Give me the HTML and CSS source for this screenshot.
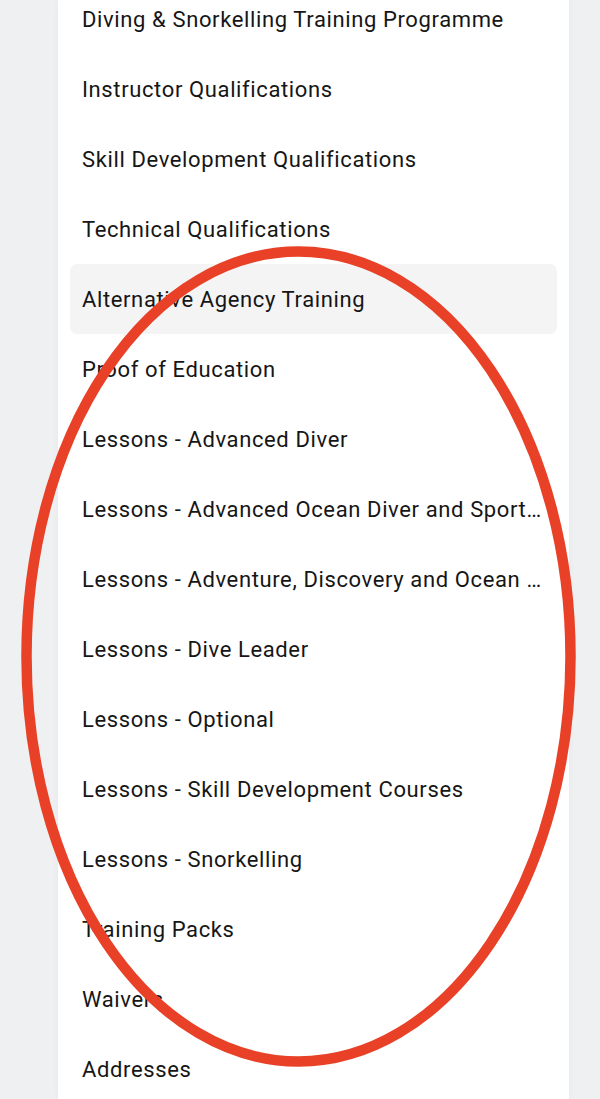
FILE: index.html
```html
<!DOCTYPE html>
<html lang="en">
<head>
<meta charset="utf-8">
<title>Menu</title>
<link rel="stylesheet" href="styles.css">
</head>
<body>
<div class="page">
  <nav class="panel">
    <ul class="menu">
      <li class="item">Diving &amp; Snorkelling Training Programme</li>
      <li class="item">Instructor Qualifications</li>
      <li class="item">Skill Development Qualifications</li>
      <li class="item">Technical Qualifications</li>
      <li class="item active">Alternative Agency Training</li>
      <li class="item">Proof of Education</li>
      <li class="item">Lessons - Advanced Diver</li>
      <li class="item">Lessons - Advanced Ocean Diver and Sports Diver</li>
      <li class="item">Lessons - Adventure, Discovery and Ocean Diver</li>
      <li class="item">Lessons - Dive Leader</li>
      <li class="item">Lessons - Optional</li>
      <li class="item">Lessons - Skill Development Courses</li>
      <li class="item">Lessons - Snorkelling</li>
      <li class="item">Training Packs</li>
      <li class="item">Waivers</li>
      <li class="item">Addresses</li>
    </ul>
  </nav>
</div>
<svg class="annotation" width="600" height="1099" viewBox="0 0 600 1099">
  <ellipse cx="298.5" cy="656.5" rx="272" ry="405" fill="none" stroke="#e84127" stroke-width="10.5"/>
</svg>
</body>
</html>
```
FILE: styles.css
```css
html, body {
  margin: 0;
  padding: 0;
}
body {
  width: 600px;
  height: 1099px;
  overflow: hidden;
  background: #eff0f2;
  font-family: Roboto, "Noto Sans", sans-serif;
  position: relative;
}
.page {
  display: flex;
  justify-content: flex-start;
  padding-left: 58px;
  height: 1099px;
}
.panel {
  width: 511px;
  background: #ffffff;
  box-shadow: 0 0 8px rgba(0, 0, 0, 0.04);
  overflow: hidden;
}
.menu {
  list-style: none;
  margin: -16px 0 0 0;
  padding: 0 12px;
}
.item {
  display: block;
  height: 70px;
  line-height: 72px;
  padding: 0 12px;
  font-size: 22px;
  letter-spacing: 0.62px;
  color: #161616;
  border-radius: 7px;
  white-space: nowrap;
  overflow: hidden;
  text-overflow: ellipsis;
}
.item.active {
  background: #f4f4f5;
}
.annotation {
  position: absolute;
  left: 0;
  top: 0;
  pointer-events: none;
}
```
